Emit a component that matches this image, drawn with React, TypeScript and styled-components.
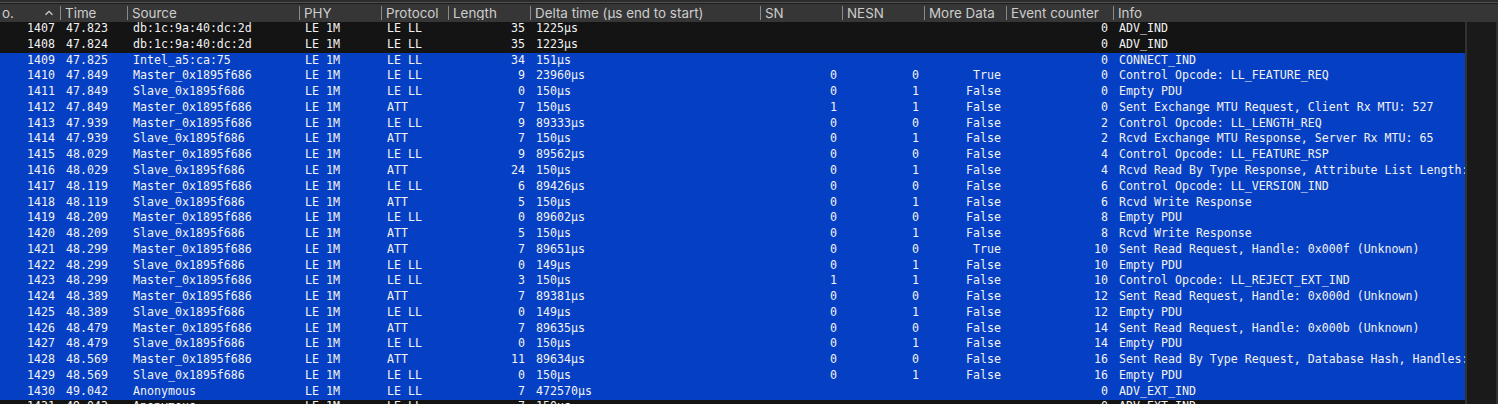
import styled, { createGlobalStyle } from 'styled-components'

const COLUMNS = '60px 67px 172px 82px 67px 82px 230px 82px 82px 82px 107px 1fr'

const HEADERS = [
  'Time',
  'Source',
  'PHY',
  'Protocol',
  'Length',
  'Delta time (µs end to start)',
  'SN',
  'NESN',
  'More Data',
  'Event counter',
  'Info',
]

const M = 'Master_0x1895f686'
const S = 'Slave_0x1895f686'

type Packet = [string, string, string, string, string, string, string, string, string, string, string]

const PACKETS: Packet[] = [
  ['1407', '47.823', 'db:1c:9a:40:dc:2d', 'LE LL', '35', '1225µs', '', '', '', '0', 'ADV_IND'],
  ['1408', '47.824', 'db:1c:9a:40:dc:2d', 'LE LL', '35', '1223µs', '', '', '', '0', 'ADV_IND'],
  ['1409', '47.825', 'Intel_a5:ca:75', 'LE LL', '34', '151µs', '', '', '', '0', 'CONNECT_IND'],
  ['1410', '47.849', M, 'LE LL', '9', '23960µs', '0', '0', 'True', '0', 'Control Opcode: LL_FEATURE_REQ'],
  ['1411', '47.849', S, 'LE LL', '0', '150µs', '0', '1', 'False', '0', 'Empty PDU'],
  ['1412', '47.849', M, 'ATT', '7', '150µs', '1', '1', 'False', '0', 'Sent Exchange MTU Request, Client Rx MTU: 527'],
  ['1413', '47.939', M, 'LE LL', '9', '89333µs', '0', '0', 'False', '2', 'Control Opcode: LL_LENGTH_REQ'],
  ['1414', '47.939', S, 'ATT', '7', '150µs', '0', '1', 'False', '2', 'Rcvd Exchange MTU Response, Server Rx MTU: 65'],
  ['1415', '48.029', M, 'LE LL', '9', '89562µs', '0', '0', 'False', '4', 'Control Opcode: LL_FEATURE_RSP'],
  ['1416', '48.029', S, 'ATT', '24', '150µs', '0', '1', 'False', '4', 'Rcvd Read By Type Response, Attribute List Length:'],
  ['1417', '48.119', M, 'LE LL', '6', '89426µs', '0', '0', 'False', '6', 'Control Opcode: LL_VERSION_IND'],
  ['1418', '48.119', S, 'ATT', '5', '150µs', '0', '1', 'False', '6', 'Rcvd Write Response'],
  ['1419', '48.209', M, 'LE LL', '0', '89602µs', '0', '0', 'False', '8', 'Empty PDU'],
  ['1420', '48.209', S, 'ATT', '5', '150µs', '0', '1', 'False', '8', 'Rcvd Write Response'],
  ['1421', '48.299', M, 'ATT', '7', '89651µs', '0', '0', 'True', '10', 'Sent Read Request, Handle: 0x000f (Unknown)'],
  ['1422', '48.299', S, 'LE LL', '0', '149µs', '0', '1', 'False', '10', 'Empty PDU'],
  ['1423', '48.299', M, 'LE LL', '3', '150µs', '1', '1', 'False', '10', 'Control Opcode: LL_REJECT_EXT_IND'],
  ['1424', '48.389', M, 'ATT', '7', '89381µs', '0', '0', 'False', '12', 'Sent Read Request, Handle: 0x000d (Unknown)'],
  ['1425', '48.389', S, 'LE LL', '0', '149µs', '0', '1', 'False', '12', 'Empty PDU'],
  ['1426', '48.479', M, 'ATT', '7', '89635µs', '0', '0', 'False', '14', 'Sent Read Request, Handle: 0x000b (Unknown)'],
  ['1427', '48.479', S, 'LE LL', '0', '150µs', '0', '1', 'False', '14', 'Empty PDU'],
  ['1428', '48.569', M, 'ATT', '11', '89634µs', '0', '0', 'False', '16', 'Sent Read By Type Request, Database Hash, Handles:'],
  ['1429', '48.569', S, 'LE LL', '0', '150µs', '0', '1', 'False', '16', 'Empty PDU'],
  ['1430', '49.042', 'Anonymous', 'LE LL', '7', '472570µs', '', '', '', '0', 'ADV_EXT_IND'],
  ['1431', '49.043', 'Anonymous', 'LE LL', '7', '150µs', '', '', '', '0', 'ADV_EXT_IND'],
]

const isSelected = (no: string) => Number(no) >= 1409 && Number(no) <= 1430

const App = () => (
  <Window>
    <GlobalStyle />
    <TopEdge />
    <HeaderRow>
      <FirstHeading>
        o.
        <SortCaret width="10" height="6" viewBox="0 0 10 6">
          <path d="M1.5 4.8 5 1.4 8.5 4.8" />
        </SortCaret>
      </FirstHeading>
      {HEADERS.map((title) => (
        <Heading key={title}>{title}</Heading>
      ))}
    </HeaderRow>
    <Body>
      <PacketList>
        <Rows>
          {PACKETS.map(([no, time, source, protocol, length, delta, sn, nesn, more, counter, info]) => (
            <Row key={no} $selected={isSelected(no)}>
              <Cell $right>{no}</Cell>
              <Cell>{time}</Cell>
              <Cell>{source}</Cell>
              <Cell>LE 1M</Cell>
              <Cell>{protocol}</Cell>
              <Cell $right>{length}</Cell>
              <Cell>{delta}</Cell>
              <Cell $right>{sn}</Cell>
              <Cell $right>{nesn}</Cell>
              <Cell $right>{more}</Cell>
              <Cell $right>{counter}</Cell>
              <Cell>{info}</Cell>
            </Row>
          ))}
        </Rows>
      </PacketList>
      <Scrollbar />
    </Body>
  </Window>
)

export default App

const GlobalStyle = createGlobalStyle`
  html, body {
    margin: 0;
    padding: 0;
    background: #1a1a1a;
  }
`

const Window = styled.div`
  width: 1498px;
  height: 404px;
  display: flex;
  flex-direction: column;
  overflow: hidden;
  background: #161616;
`

const TopEdge = styled.div`
  height: 4px;
  flex: none;
  box-sizing: border-box;
  background: #505050;
  border-top: 2px solid #2c2c2c;
  border-bottom: 1px solid #1e1e1e;
`

const HeaderRow = styled.div`
  height: 18px;
  flex: none;
  display: grid;
  grid-template-columns: ${COLUMNS};
  align-items: center;
  background: #363636;
  font-family: Inter, 'Liberation Sans', sans-serif;
  font-size: 13.4px;
  color: #cdcdcd;
  position: relative;
  z-index: 1;
`

const Heading = styled.div`
  height: 14px;
  line-height: 14px;
  padding-left: 4px;
  border-left: 1px solid #8a8a8a;
  white-space: nowrap;
  overflow: hidden;
`

const FirstHeading = styled.div`
  display: flex;
  align-items: center;
  justify-content: space-between;
  padding: 0 6px 0 2px;
`

const SortCaret = styled.svg`
  fill: none;
  stroke: #d0d0d0;
  stroke-width: 1.3;
`

const Body = styled.div`
  flex: 1;
  min-height: 0;
  display: flex;
`

const PacketList = styled.div`
  flex: 1;
  min-width: 0;
  overflow: hidden;
  padding-left: 1px;
  background: #141414;
  box-shadow: inset 1px 0 0 #3a3a3a;
`

const Rows = styled.div`
  margin: -0.8px 0 0 -1px;
  display: grid;
  grid-auto-rows: 15.78px;
  font-family: 'DejaVu Sans Mono', 'Liberation Mono', monospace;
  font-size: 11.62px;
  color: #f2f2f2;
`

const Row = styled.div<{ $selected: boolean }>`
  display: grid;
  grid-template-columns: ${COLUMNS};
  align-items: center;
  box-sizing: border-box;
  padding-bottom: 2px;
  background: ${(props) => (props.$selected ? '#0540c4' : '#141414')};
`

const Cell = styled.div<{ $right?: boolean }>`
  padding: ${(props) => (props.$right ? '0 5px 0 0' : '0 0 0 6px')};
  text-align: ${(props) => (props.$right ? 'right' : 'left')};
  white-space: nowrap;
  overflow: hidden;
`

const Scrollbar = styled.div`
  width: 33px;
  flex: none;
  box-sizing: border-box;
  background: #1a1a1a;
  border-left: 2px solid #323232;
  border-right: 2px solid #303030;
`
